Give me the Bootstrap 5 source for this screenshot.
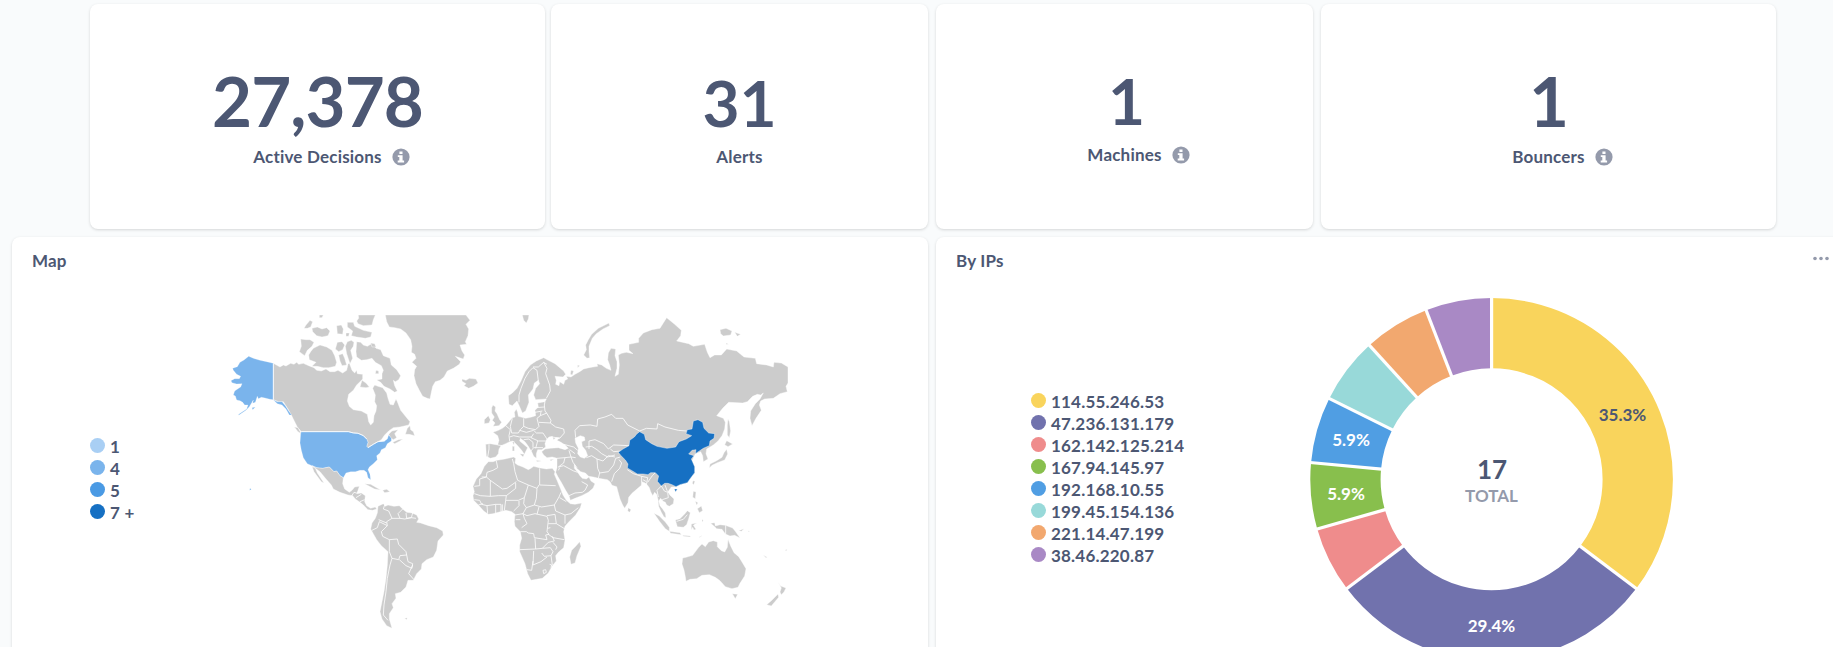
<!DOCTYPE html>
<html lang="en">
<head>
<meta charset="utf-8">
<title>Security dashboard</title>
<link href="https://cdn.jsdelivr.net/npm/bootstrap@5.3.0/dist/css/bootstrap.min.css" rel="stylesheet">
<style>
body{font-family:Lato,sans-serif;font-weight:700;font-size:17px;letter-spacing:.2px;color:#4c5773;background:#f9fbfc;overflow:hidden;height:647px}
main{height:647px;overflow:hidden}
.panel{background:#fff;border:0;border-radius:8px;box-shadow:0 1px 3px rgba(0,0,0,.15);color:inherit}
.stats{display:grid;grid-template-columns:455px 375px 377px 455px;column-gap:8px;padding:4px 0 0 90px;height:229px}
.stats .panel:nth-child(2){margin-left:-2px}
.stat-lg{padding-top:62px}.stat-md{padding-top:66px}.stat-up{padding-top:64px}
.num{font-size:69px;line-height:70px;letter-spacing:-.9px}
.stat-md .num,.stat-up .num{font-size:64px;line-height:66px;letter-spacing:0}
.stat-up .num{padding-left:4px}
.lbl{line-height:20px;margin-top:11px}
.info{position:absolute;left:100%;top:1px;margin-left:10px}
.charts{display:grid;grid-template-columns:916px 916px;column-gap:8px;padding:8px 0 0 12px}
.charts .panel{height:430px}
.head{height:44px;padding:14px 20px 0;line-height:20px}
.chart-map{display:grid;grid-template-columns:208px 600px}
.chart-pie{display:grid;grid-template-columns:354px 400px}
.keys li{height:22px;line-height:22px;display:flex;gap:5px;white-space:nowrap}
.keys i{width:15px;height:15px;border-radius:50%;margin-top:3px;flex:none}
.keys span{position:relative;top:1px}
.k-map{padding:154px 0 0 78px}.k-pie{padding:109px 0 0 95px}
svg{display:block}
.land path{fill:#ccc;stroke:#fff;stroke-width:1.2;stroke-linejoin:round}
.land .us{fill:#7ab4ec;stroke-width:.7}.land .cn{fill:#1670c3}
.land .bd{fill:none;stroke:#fff;stroke-width:2.4}
.land .sea{fill:#fff}
.ring circle{fill:none;stroke-width:70.3}
</style>
</head>
<body>
<main>
<section class="stats">
  <div class="card panel text-center align-items-center stat-lg"><div class="num">27,378</div><div class="lbl position-relative">Active Decisions<svg class="info" width="18" height="18" viewBox="0 0 18 18"><circle cx="9" cy="9" r="8.6" fill="#949aab"/><path fill="#fff" d="M7.4 3.4h3.1v2.5H7.4zM5.8 7.3h4.8v5.3h1.5v1.9H5.7v-1.9h1.6V9H5.8z"/></svg></div></div>
  <div class="card panel text-center align-items-center stat-md"><div class="num">31</div><div class="lbl">Alerts</div></div>
  <div class="card panel text-center align-items-center stat-up"><div class="num">1</div><div class="lbl position-relative">Machines<svg class="info" width="18" height="18" viewBox="0 0 18 18"><circle cx="9" cy="9" r="8.6" fill="#949aab"/><path fill="#fff" d="M7.4 3.4h3.1v2.5H7.4zM5.8 7.3h4.8v5.3h1.5v1.9H5.7v-1.9h1.6V9H5.8z"/></svg></div></div>
  <div class="card panel text-center align-items-center stat-lg"><div class="num">1</div><div class="lbl position-relative">Bouncers<svg class="info" width="18" height="18" viewBox="0 0 18 18"><circle cx="9" cy="9" r="8.6" fill="#949aab"/><path fill="#fff" d="M7.4 3.4h3.1v2.5H7.4zM5.8 7.3h4.8v5.3h1.5v1.9H5.7v-1.9h1.6V9H5.8z"/></svg></div></div>
</section>
<section class="charts">
 <div class="card panel">
  <div class="head">Map</div>
  <div class="chart-map">
   <ul class="keys k-map list-unstyled mb-0">
    <li><i style="background:#a9cff4"></i><span>1</span></li><li><i style="background:#7ab4ec"></i><span>4</span></li><li><i style="background:#4a9ae4"></i><span>5</span></li><li><i style="background:#1670c3"></i><span>7 +</span></li>
   </ul>
   <svg class="land" width="600" height="366" viewBox="220 281 600 366">
    <!-- North America -->
    <g transform="translate(220 305) scale(.33333)">
     <path d="M160 175L180 186 190 180 198 183 212 175 222 178 230 172 236 178 250 175 266 182 282 188 290 196 304 198 318 192 330 200 344 200 354 196 368 204 380 196 384 178 388 174 396 196 404 204 410 196 412 206 428 208 428 222 420 230 410 240 400 256 386 268 382 288 388 304 400 314 424 318 442 328 446 350 452 360 460 352 462 332 468 318 470 302 464 290 466 270 458 250 464 240 474 244 488 248 500 264 504 280 510 298 520 300 528 282 532 290 542 316 560 338 570 350 566 360 540 366 520 368 506 378 494 390 484 404 474 410 460 418 444 428 440 424 444 412 440 402 430 392 414 385 400 384 385 380 244 380 232 366 224 350 216 334 204 312 190 290 175 290 160 284Z"/>
     <path d="M506 388L516 378 534 374 524 386 530 398 520 404 512 398ZM518 412L535 404 548 402 540 408 524 416ZM556 388L562 370 570 362 572 374 580 380 584 392 568 388ZM223 366L234 368 244 386 234 380Z"/>
     <path d="M410 110L422 112 430 120 442 124 452 118 462 122 468 130 482 134 490 152 510 160 514 180 530 194 542 212 536 224 526 230 520 226 524 242 532 258 524 262 510 252 492 244 482 232 470 225 486 222 486 206 490 196 484 182 466 172 456 160 440 164 424 166 410 156 408 140Z"/>
     <path d="M280 130L300 120 320 126 336 136 344 152 350 172 346 184 326 188 310 188 292 184 276 184 288 172 268 164 266 150 272 140ZM242 102L258 104 270 104 282 112 276 124 262 136 254 152 238 140 244 124ZM252 70L258 60 270 46 278 50 272 66 262 70ZM276 70L292 66 306 72 320 68 330 78 324 92 306 96 290 92 278 80ZM350 62L364 60 370 72 368 88 352 86ZM352 112L366 110 374 120 368 134 356 140 346 132ZM382 52L400 52 404 64 430 76 456 82 452 96 436 100 410 96 394 92 398 78 382 66ZM415 30L466 30 460 44 456 60 430 62 414 56 410 48 416 40ZM298 30L310 30 306 38 298 38ZM382 110L394 106 402 112 400 124 392 136 398 160 390 176 380 146 376 124ZM426 226L438 234 448 246 438 248 420 246ZM356 150L368 146 374 160 380 180 366 182 360 168ZM468 196L476 198 476 206 466 206ZM378 84L388 84 386 94 378 94ZM452 114L464 116 468 126 456 126Z"/>
     <path class="us" d="M38 190L52 185 60 172 72 165 86 154 100 160 120 166 140 170 160 175 160 284 150 283 135 279 124 277 115 281 112 274 106 292 98 295 100 285 96 292 88 305 78 316 56 331 56 328 80 312 84 300 74 300 68 292 60 287 50 285 46 273 40 270 44 258 56 250 62 246 66 236 50 237 36 233 33 227 44 221 58 221 62 214 50 208 40 196Z"/>
     <path class="us" d="M160 284L172 290 186 290 196 302 206 318 215 330 208 330 198 312 186 300 172 296ZM96 308L106 306 98 314ZM90 549L94 554 89 556Z"/>
     <path class="us" d="M242 386L244 380 385 380 400 384 414 385 430 392 440 402 444 412 440 424 444 428 460 418 474 410 494 408 502 402 506 390 514 400 514 408 502 416 496 428 484 434 480 444 470 452 472 464 460 476 448 486 444 494 450 508 452 524 444 518 440 502 432 496 420 496 406 500 392 500 378 504 370 518 360 512 350 498 342 500 328 486 308 490 290 488 276 482 262 476 250 458 244 436 240 414Z"/>
     <path d="M276 482L290 488 308 490 328 486 342 500 350 498 360 512 370 518 368 536 374 552 388 562 396 556 404 546 418 544 414 556 410 566 424 564 436 572 434 590 440 602 452 610 466 606 470 612 458 616 444 614 430 600 420 592 406 582 398 572 384 570 360 562 340 552 334 540 318 522 300 500ZM276 484L286 490 292 504 300 516 312 534 304 530 292 514 282 500Z"/>
     <path d="M434 536L452 538 466 546 482 555 464 552 448 544ZM488 556L500 553 510 560 494 563Z"/>
     <path class="bd" d="M394 574L402 562 410 564M408 578L424 568M420 590L434 584M160 175V284M244 380H385L400 384 414 385 430 392 440 402M444 428L460 418 474 410 494 408"/>
    </g>
    <!-- Greenland, Iceland, South America -->
    <g transform="translate(370 305) scale(.33333)">
     <path d="M46 30L288 30 300 46 288 58 296 72 294 92 286 110 290 118 270 120 276 138 284 150 280 162 256 154 272 170 268 178 250 190 232 198 222 216 210 226 196 230 188 244 184 262 180 282 172 280 158 274 148 256 138 236 132 212 134 194 140 184 126 172 138 160 134 148 124 142 126 124 122 104 108 84 92 72 74 68 58 66 50 50Z"/>
     <path d="M276 222L288 226 298 220 318 222 324 234 310 244 296 250 282 242 288 236 276 229Z"/>
     <path d="M24 604L40 596 46 604 54 600 72 604 88 602 98 612 110 622 126 624 140 630 146 642 140 652 152 654 176 662 200 668 218 678 220 690 204 708 200 736 190 756 170 764 156 776 154 792 140 806 130 826 114 826 108 846 92 862 76 866 78 880 66 896 70 908 58 926 58 942 66 970 50 962 36 942 30 920 36 890 42 860 48 820 52 780 54 740 34 722 20 704 12 690 2 672 6 654 16 640 22 624Z"/>
     <path class="bd" d="M44 600L40 612 56 618 66 640 50 650 52 662 34 680 38 694 58 704 82 702 86 718 108 740 110 750 90 752 86 764 66 760 58 740 58 704M66 640L90 640 84 626 98 612M108 624L110 640 124 638 128 624M90 640L104 642 124 638 138 640M110 750L114 770 128 776 126 790 108 782 88 764M128 780L116 806 132 824M66 760L60 780 52 820 48 860 42 900 40 930 54 946M52 662L28 650 22 668 6 676M26 644L50 654"/>
     <path d="M104 940L112 938 110 944Z"/>
    </g>
    <!-- Europe, Asia, Africa -->
    <g transform="translate(465 305) scale(.33333)">
     <path d="M130 272L142 264 156 250 168 228 180 200 196 180 214 168 236 158 250 166 270 176 296 198 302 208 294 216 270 214 274 226 272 238 282 242 284 230 296 238 300 226 308 222 304 214 318 216 330 208 344 200 356 192 372 188 384 186 398 184 396 176 410 180 424 190 438 196 434 180 428 164 430 144 438 130 452 132 450 152 456 170 456 190 450 214 460 208 463 180 460 150 470 145 484 142 504 146 492 136 492 118 521 112 521 100 535 84 561 74 585 70 605 38 629 58 649 76 647 92 635 108 671 116 685 124 719 118 727 142 735 158 749 150 769 150 785 132 815 138 837 156 871 160 875 176 905 180 925 186 927 172 949 174 969 186 969 234 963 244 967 260 945 266 925 280 899 282 887 288 883 300 889 316 873 340 861 362 855 340 857 318 871 296 885 282 895 264 887 270 877 268 863 274 847 290 833 294 791 292 773 310 755 332 775 340 781 352 779 372 771 392 759 408 745 420 725 432 723 446 729 462 715 470 713 452 707 440 691 446 681 467 689 485 689 503 677 519 667 533 645 539 633 545 619 546 609 560 615 570 627 582 625 596 613 604 605 600 601 592 593 588 587 580 581 588 585 602 593 612 601 624 603 638 597 636 589 622 581 604 579 584 575 568 569 562 563 572 557 560 553 548 547 540 541 534 530 530 529 541 515 553 501 565 491 577 489 593 479 610 473 600 465 582 459 560 455 545 441 541 435 530 427 524 401 520 385 516 371 514 361 504 347 500 335 490 328 478 328 490 338 502 345 512 352 520 364 522 372 516 378 528 390 536 384 550 370 562 350 572 330 580 316 586 312 572 302 556 290 534 278 514 272 502 276 488 276 460 262 456 246 458 236 450 230 440 240 432 256 430 280 428 300 434 310 430 300 420 288 412 276 406 284 398 272 398 266 404 262 394 252 396 244 404 240 416 242 426 230 434 218 434 214 446 214 460 206 454 200 440 190 424 180 410 166 400 164 408 176 418 188 428 184 436 178 448 170 436 156 420 144 408 134 410 122 416 108 422 102 432 100 446 92 456 76 460 64 454 62 418 76 416 98 420 102 406 98 392 84 382 100 376 112 370 122 362 132 350 142 338 150 336 148 322 154 312 158 322 160 334 182 340 200 336 212 332 210 316 220 306 218 294 240 290 244 282 212 284 206 270 212 250 224 236 220 226 208 234 204 252 190 270 192 292 182 318 172 324 160 296 156 288 142 302 132 298Z"/>
     <path class="sea" d="M330 400L346 392 358 396 360 406 350 410 352 424 362 436 368 452 358 460 346 456 338 446 340 430 332 414Z"/>
     <path d="M84 300L92 306 90 318 96 326 104 344 110 352 102 362 84 364 90 354 82 346 88 336 80 324 80 308ZM58 344L70 332 76 344 72 354 58 356ZM172 30L192 30 190 42 184 54 176 46ZM432 54L434 62 414 72 394 86 382 100 372 124 372 140 374 158 366 160 356 150 364 134 362 120 370 104 380 88 400 70 420 60ZM765 74L783 70 801 78 797 90 775 93 767 86ZM809 82L827 88 817 94ZM783 114L791 118 783 118ZM164 446L178 448 174 456ZM142 424L148 424 148 438 142 438ZM142 412L148 410 147 420ZM214 466L230 468 216 470ZM254 464L266 462 258 468ZM318 196L326 198 322 210 316 208ZM338 180L344 182 338 188ZM789 342L793 350 797 378 793 398 787 390 787 360ZM490 608L498 614 494 622 488 618ZM344 710L348 724 336 752 330 774 318 778 314 756 320 736 332 724Z"/>
     <path class="bd" d="M332 398L330 376 344 362 376 360 396 364 398 342 420 336 440 328 452 340 474 340 488 360 524 378 544 370 576 372 578 356 600 366 640 376 664 378M372 432L372 408 390 404 416 416 430 432 446 420 492 422M362 426L380 424 396 434 410 446 428 456 450 450M436 432L446 440 470 438M364 458L380 452 396 462 398 490 404 504 400 520M396 462L414 468 430 452 450 456M404 504L430 500 446 480 452 460 466 456M440 530L448 506 464 490 470 474 462 464M487 494L505 506 530 514 530 532M530 514L548 518 544 540M534 524L544 530M548 532L562 512 571 503M589 543L576 556 580 576M589 543L598 558 608 562 610 578 592 584 590 590M600 540L606 556 620 574M312 436L318 456M276 460L300 458 318 456 332 458M318 456L324 472 336 488M300 458L296 474 280 486 296 482 326 498 338 502M280 496L284 488M312 572L330 564 352 562 360 556 368 540 350 530M296 418L326 426 338 436M314 434L330 446M262 396L284 400 298 384 296 372 272 366 256 354 258 346 246 326 240 318 238 300 240 290M222 352L256 354M226 332L246 324M176 340L176 364 190 370 212 374 222 364 216 340 226 332 228 320M142 340L136 364 140 384 160 384 166 374 176 364M164 376L184 382 206 376 214 384 234 384 246 402M206 386L198 398 220 408 242 408M98 420L112 422M122 362L136 374 132 392 134 408M134 396L146 392 164 396 186 396 200 396M176 404L192 402 204 412 204 428M196 440L206 428 234 428M218 408L212 430M72 418L72 432 68 456M162 292L162 270 168 250 180 220 192 200 204 188 216 196 220 228M204 186L220 186 236 172 246 178M236 172L246 190 242 206 254 240 256 258 244 280M212 308L238 306M210 322L232 318"/>
     <path d="M84 470L96 466 120 462 146 456 152 460 150 474 158 480 174 486 190 494 198 490 206 484 222 488 244 492 262 490 270 500 268 508 276 526 286 550 294 570 304 586 316 596 330 598 350 594 346 608 332 630 312 650 300 664 296 680 300 706 296 728 280 742 272 752 274 768 262 782 250 804 232 820 198 826 188 806 180 776 164 740 164 720 170 700 166 680 150 664 148 650 150 628 140 620 122 616 100 622 84 626 70 628 56 618 40 600 26 586 24 572 28 560 24 544 34 522 48 506 58 484 70 470Z"/>
     <path class="bd" d="M50 516L64 516 66 502 84 496 98 488 94 468M28 544L44 542 44 522 64 516M64 516L76 526 76 574 46 572 28 566M76 526L112 552 126 550 154 530M142 462L146 476 150 500 158 526 190 540 216 550M224 490L224 540 272 542M222 540L216 550 214 580 208 600 184 608 174 626 150 630M152 534L152 550 124 572 122 586 160 586 178 578 190 540M178 578L176 596 184 608M76 574L100 572 124 572M122 586L118 616M162 588L162 602 146 618M92 624L92 598 108 598 108 620M112 598L112 618M92 598L66 602 68 626M28 584L44 586 50 598 66 602M40 600L54 596M208 600L230 606 268 600 282 576 288 562M268 600L272 618 300 630 318 626 340 608M284 578L304 590M222 606L216 628M174 626L178 640 186 656 170 668M152 644L166 644M186 632L210 626 246 634 250 646 246 680 252 688 242 690 246 704 232 702 208 698 206 686 190 684 184 680 166 680M186 632L174 626M246 632L270 628 274 656 300 672M250 656L274 656M300 630L300 656M248 670L256 668M250 688L264 698 298 704M210 700L212 732 164 734M212 732L232 730 250 712 268 708 262 694M232 730L256 728 264 740 258 752 238 754 230 744M206 738L204 780 228 770 246 756M204 768L200 796 186 794M264 712L276 726 272 734M258 752L262 780M234 796L242 794 244 802 236 806ZM254 778L260 780 258 788"/>
     <path class="cn" d="M460 442L474 432 492 422 494 406 508 396 516 386 524 380 538 388 542 404 560 416 576 424 606 430 632 426 642 410 664 402 680 392 663 386 667 374 681 372 685 348 699 344 713 352 717 370 731 384 749 386 747 400 735 408 733 422 715 430 703 438 691 446 693 434 681 436 671 447 687 452 679 462 689 485 689 503 677 519 667 533 645 539 633 545 621 539 609 535 599 535 589 543 577 529 581 513 571 503 557 503 549 509 535 507 517 507 501 497 487 489 489 477 481 465 467 451ZM628 552L637 552 632 561Z"/>
    </g>
    <!-- Japan, Indonesia, Oceania -->
    <g transform="translate(600 440) scale(.33333)">
     <path d="M380 28L383 42 374 60 352 68 336 76 328 84 330 72 350 62 366 52 372 38ZM380 2L398 12 384 20 374 14ZM279 122L285 124 281 134 277 130ZM280 154L288 156 286 176 278 172ZM286 184L294 188 290 196ZM292 206L304 198 308 212 298 218ZM162 220L178 228 196 246 208 262 208 274 196 266 180 246ZM208 274L240 278 244 284 212 280ZM226 240L240 236 254 222 262 212 271 218 266 236 260 254 250 262 232 260ZM274 252L290 249 280 256 288 268 282 270 278 262 274 270ZM248 286L272 288 270 291 250 289ZM296 292L308 286 300 292ZM332 250L344 248 346 258 360 254 376 256 398 264 406 274 420 294 404 286 390 288 376 282 366 268 350 266 344 260ZM416 272L432 266 424 274ZM306 238L310 242 306 246Z"/>
     <path d="M248 354L258 352 278 346 296 322 306 312 316 320 326 306 340 302 352 306 352 320 364 332 374 336 382 322 384 298 392 318 402 338 416 350 426 366 438 386 434 408 420 430 414 442 396 446 376 440 360 422 346 412 328 404 306 406 290 416 270 418 258 424 256 410 252 390 246 372Z"/>
     <path d="M397 461L413 463 406 476ZM534 426L542 438 558 444 552 456 544 464 540 456 544 444ZM534 462L536 472 524 486 514 498 500 494 514 482 526 470ZM489 345L502 352 498 353ZM556 330L562 328 558 334ZM444 272L450 275 446 276Z"/>
     <path class="bd" d="M377 256L377 284M230 244L250 238 262 224"/>
    </g>
   </svg>
  </div>
 </div>
 <div class="card panel">
  <div class="head d-flex">By IPs
   <svg class="ms-auto" width="20" height="20" viewBox="0 0 20 20" style="margin-right:3px" fill="#949aab"><circle cx="6" cy="7.5" r="1.8"/><circle cx="12" cy="7.5" r="1.8"/><circle cx="18" cy="7.5" r="1.8"/></svg>
  </div>
  <div class="chart-pie">
   <ul class="keys k-pie list-unstyled mb-0">
    <li><i style="background:#f9d45c"></i><span>114.55.246.53</span></li>
    <li><i style="background:#7172ad"></i><span>47.236.131.179</span></li>
    <li><i style="background:#ef8c8c"></i><span>162.142.125.214</span></li>
    <li><i style="background:#88bf4d"></i><span>167.94.145.97</span></li>
    <li><i style="background:#509ee3"></i><span>192.168.10.55</span></li>
    <li><i style="background:#98d9d9"></i><span>199.45.154.136</span></li>
    <li><i style="background:#f2a86f"></i><span>221.14.47.199</span></li>
    <li><i style="background:#a989c5"></i><span>38.46.220.87</span></li>
   </ul>
   <svg width="400" height="366" viewBox="1290 281 400 366" text-anchor="middle" font-size="17" letter-spacing="0" fill="#fff">
    <g class="ring" id="ring" transform="translate(1491.6 479.3)"></g>
    <text x="1622.5" y="421" fill="#4c5773">35.3%</text>
    <text x="1491.5" y="632">29.4%</text>
    <text x="1346" y="500">5.9%</text>
    <text x="1351" y="446">5.9%</text>
    <text x="1492" y="479" font-size="26" fill="#4c5773">17</text>
    <text x="1491.5" y="502" fill="#949aab">TOTAL</text>
   </svg>
  </div>
 </div>
</section>
</main>
<script src="https://cdn.jsdelivr.net/npm/bootstrap@5.3.0/dist/js/bootstrap.bundle.min.js"></script>
<script>
const slices=[[6,'#f9d45c'],[5,'#7172ad'],[1,'#ef8c8c'],[1,'#88bf4d'],[1,'#509ee3'],[1,'#98d9d9'],[1,'#f2a86f'],[1,'#a989c5']];
let at=0,arcs='',gaps='';
for(const [n,c] of slices){
  const a=at*360/17;
  arcs+=`<circle r="146.15" stroke="${c}" pathLength="17" stroke-dasharray="${n} ${17-n}" transform="rotate(${a-90})"/>`;
  gaps+=`<path d="M0-108V-185" stroke="#fff" stroke-width="3.2" transform="rotate(${a})"/>`;
  at+=n;
}
document.getElementById('ring').innerHTML=arcs+gaps;
</script>
</body>
</html>
